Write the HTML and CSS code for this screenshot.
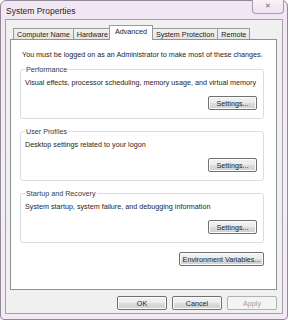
FILE: index.html
```html
<!DOCTYPE html>
<html lang="en">
<head>
  <meta charset="UTF-8">
  <title>System Properties</title>
  <link rel="stylesheet" href="styles.css">
</head>
<body>

<div class="window">
  <div class="titlebar">
    <span class="title">System Properties</span>
    <button class="close">&#x2715;</button>
  </div>

  <div class="client">
    <div class="tabs">
      <div class="tab">Computer Name</div>
      <div class="tab">Hardware</div>
      <div class="tab active">Advanced</div>
      <div class="tab">System Protection</div>
      <div class="tab">Remote</div>
    </div>

    <div class="panel">
      <p class="notice">You must be logged on as an Administrator to make most of these changes.</p>

      <fieldset class="group">
        <legend>Performance</legend>
        <p>Visual effects, processor scheduling, memory usage, and virtual memory</p>
        <div class="row"><button class="btn">Settings...</button></div>
      </fieldset>

      <fieldset class="group">
        <legend>User Profiles</legend>
        <p>Desktop settings related to your logon</p>
        <div class="row"><button class="btn">Settings...</button></div>
      </fieldset>

      <fieldset class="group">
        <legend>Startup and Recovery</legend>
        <p>System startup, system failure, and debugging information</p>
        <div class="row"><button class="btn">Settings...</button></div>
      </fieldset>

      <div class="row env"><button class="btn wide">Environment Variables...</button></div>
    </div>

    <div class="actions">
      <button class="btn action">OK</button>
      <button class="btn action">Cancel</button>
      <button class="btn action" disabled>Apply</button>
    </div>
  </div>
</div>

</body>
</html>
```

FILE: styles.css
```css
body {
  margin: 0;
  background: #fff;
  font-family: 'Liberation Sans', Arial, sans-serif;
}

.window {
  width: 288px;
  height: 320px;
  box-sizing: border-box;
  background: linear-gradient(to bottom, #f1e6f3, #f6eef7 60%, #f3e9f4);
  border: 1px solid #8f8a95;
  border-radius: 6px 6px 4px 4px;
  display: flex;
  flex-direction: column;
}

.titlebar {
  height: 18px;
  display: flex;
  justify-content: space-between;
  align-items: flex-start;
}

.title {
  font-size: 8.5px;
  color: #1e1e1e;
  padding: 5px 0 0 5px;
  text-shadow: 0 0 6px #fff;
}

.close {
  width: 32px;
  height: 14px;
  margin: -1px 3px 0 0;
  padding: 0;
  border: 1px solid #a99cab;
  border-top: none;
  border-radius: 0 0 4px 4px;
  background: linear-gradient(to bottom, #f8f2f9, #eee2f0);
  color: #6d6870;
  font-size: 7px;
  line-height: 13px;
  font-family: 'DejaVu Sans', sans-serif;
}

.client {
  flex: 1;
  margin: 0 4px 5px 4px;
  background: #f0f0f0;
  border: 1px solid #a5a1a8;
  display: flex;
  flex-direction: column;
  padding: 5px 5px 0 4px;
}

.tabs {
  display: flex;
  padding-left: 3px;
  height: 14px;
  align-items: flex-end;
}

.tab {
  font-size: 7.2px;
  color: #222;
  height: 11px;
  line-height: 11px;
  padding: 0 3px;
  border: 1px solid #9a9a9a;
  border-bottom: none;
  margin-right: -1px;
  background: linear-gradient(to bottom, #f2f2f2, #e4e4e4);
  box-sizing: border-box;
}

.tab.active {
  line-height: 12px;
  background: #fff;
  position: relative;
  z-index: 1;
  margin: 0 0 -1px -2px;
  padding: 0 5px;
  height: 15px;
}

.tab.active + .tab {
  margin-left: -1px;
}

.panel {
  height: 251px;
  box-sizing: border-box;
  background: #fff;
  border: 1px solid #8e9198;
  padding: 10px 12px 0 9px;
  display: flex;
  flex-direction: column;
}

.panel p {
  margin: 0;
  font-size: 7.2px;
  color: #1e1e1e;
  white-space: nowrap;
}

.notice {
  padding-left: 2px;
  margin-bottom: 6px !important;
}

.group {
  margin: 0 0 8px 0;
  padding: 4px 6px 8px 4px;
  border: 1px solid #d9dde3;
  border-radius: 3px;
  min-width: 0;
}

.group legend {
  font-size: 7.2px;
  color: #3a3a3a;
  padding: 0 1px;
  margin-left: 0;
}

.group p {
  margin-bottom: 9px;
}

.row {
  display: flex;
  justify-content: flex-end;
}

.btn {
  font-family: inherit;
  font-size: 7.2px;
  color: #1e1e1e;
  height: 14px;
  width: 49px;
  padding: 0;
  border: 1px solid #707070;
  border-radius: 2px;
  background: linear-gradient(to bottom, #f2f2f2 0%, #ebebeb 50%, #dddddd 51%, #cfcfcf 100%);
  box-shadow: inset 0 0 0 1px #fcfcfc;
}

.wide {
  width: 85px;
}

.env {
  padding-top: 1px;
}

.actions {
  display: flex;
  justify-content: flex-end;
  gap: 5px;
  padding-top: 6px;
}

.btn.action {
  width: 50px;
}

.btn:disabled {
  color: #a0a0a0;
  border-color: #adb2b5;
  background: #f4f4f4;
  box-shadow: none;
}
```
